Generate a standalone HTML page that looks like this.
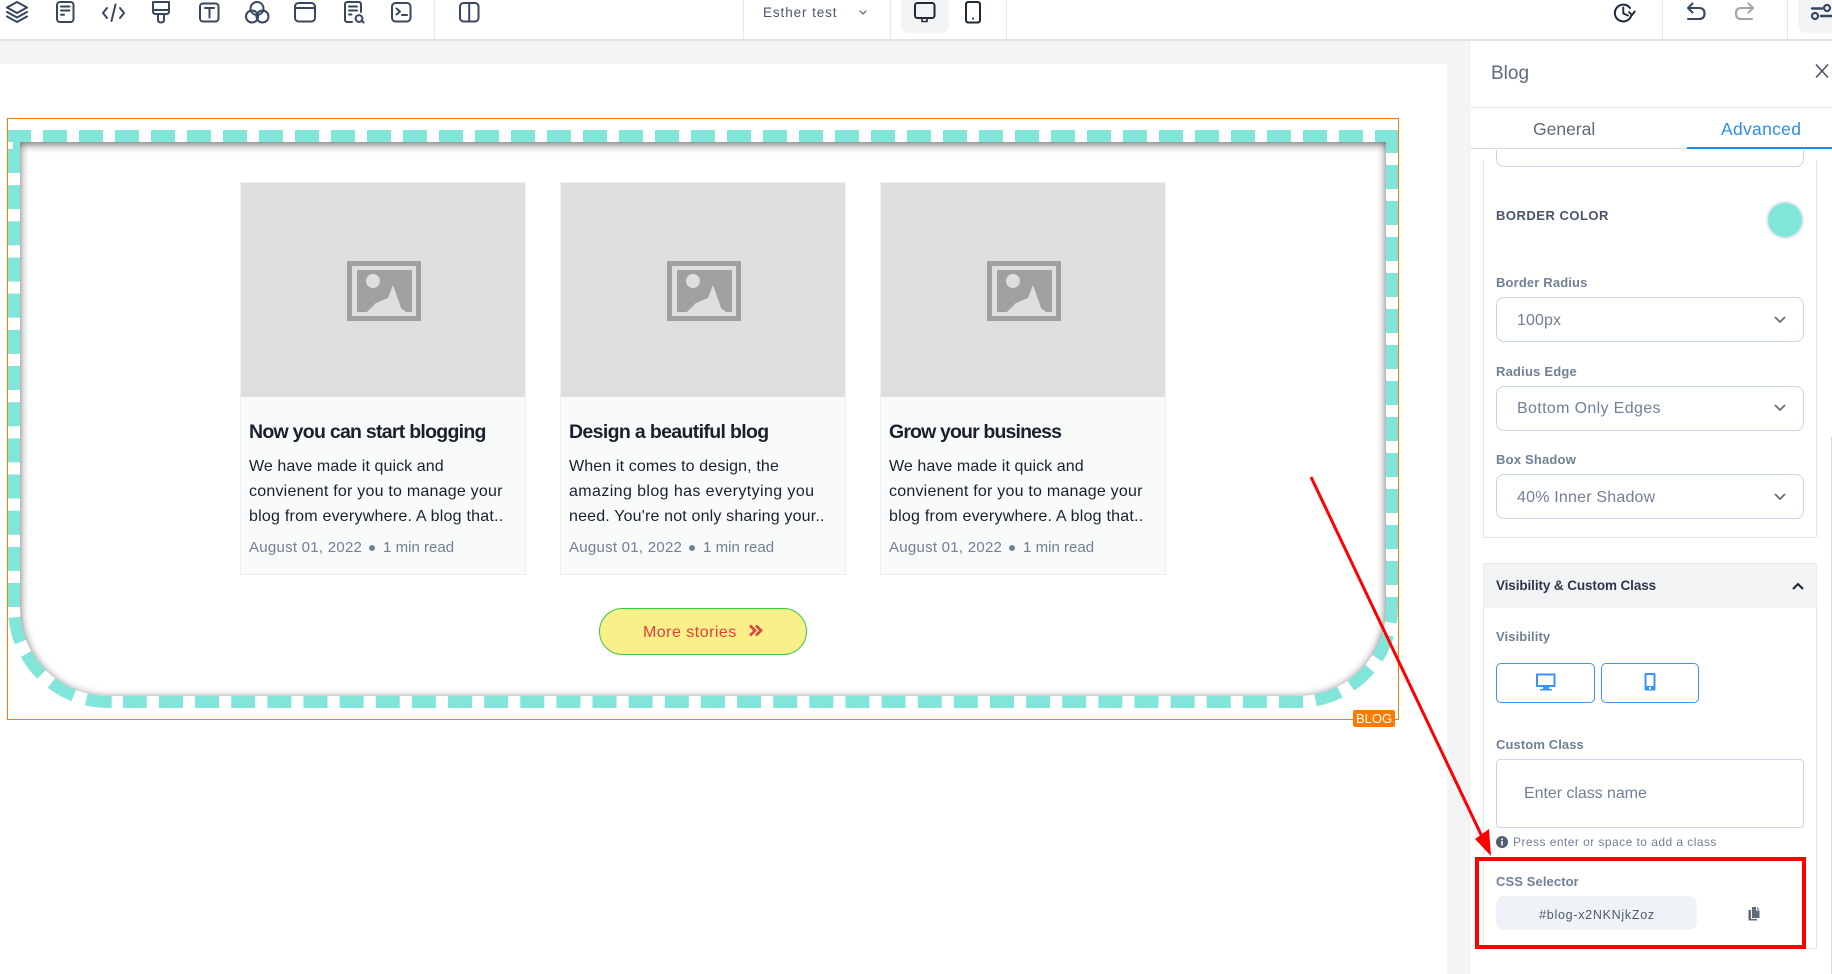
<!DOCTYPE html>
<html><head><meta charset="utf-8"><style>
html,body{margin:0;padding:0;width:1832px;height:974px;overflow:hidden;background:#fff;font-family:"Liberation Sans",sans-serif}
.a{position:absolute;box-sizing:border-box}
.t{position:absolute;white-space:nowrap;line-height:20px;height:20px}
.card{position:absolute;top:182px;width:286px;height:393px;background:#f9fafa;border:1px solid #eeeeee;box-sizing:border-box}
.img{position:absolute;left:0;top:0;width:284px;height:214px;background:#dedede}
.h{font-size:19.5px;font-weight:bold;color:#1a202c}
.b{font-size:16px;color:#1a202c}
.m{font-size:15px;color:#718096}
.l{font-size:13px;color:#718096;font-weight:bold;letter-spacing:.1px}
.sel{position:absolute;left:1496px;width:308px;height:45px;border:1px solid #cbd5e0;border-radius:8px;box-sizing:border-box;background:#fff}
.v{font-size:16px;color:#718096}
.d{position:absolute;top:0;width:1px;height:39px;background:#e2e8f0}
</style></head><body>
<div class="a" style="left:0;top:0;width:1832px;height:41px;background:#fff;border-bottom:2px solid #e2e2e4"></div>
<div class="a" style="left:0;top:41px;width:1472px;height:933px;background:#f3f4f6"></div>
<div class="a" style="left:0;top:64px;width:1447px;height:910px;background:#fff"></div>
<div class="d" style="left:434px"></div><div class="d" style="left:743px"></div><div class="d" style="left:890px"></div><div class="d" style="left:1006px"></div><div class="d" style="left:1662px"></div><div class="d" style="left:1787px"></div>
<div class="a" style="left:901px;top:0;width:48px;height:33px;background:#f3f4f6;border-radius:0 0 8px 8px"></div>
<div class="a" style="left:1798px;top:0;width:34px;height:33px;background:#f3f4f6;border-radius:0 0 0 8px"></div>
<div class="t" style="left:763px;top:3px;font-size:13.5px;color:#4a5568;letter-spacing:.9px">Esther test</div>

<svg class="a" style="left:0;top:0" width="1832" height="40" fill="none" stroke="#374760" stroke-width="2" stroke-linecap="round" stroke-linejoin="round">
<path d="M17 2L27 7.5L17 13L7 7.5Z" stroke-width="2.1"/><path d="M7 12L17 17.5L27 12" stroke-width="2.1"/><path d="M7 16.5L17 22L27 16.5" stroke-width="2.1"/>
<rect x="57" y="2" width="16.5" height="20" rx="3"/><path d="M61 6.5H69.5M61 10.5H69.5M61 14.8H64"/>
<path d="M107 8L103 13L107 18M120 8L124 13L120 18M115.5 4.5L111.5 21"/>
<path d="M153 2H169V11.5Q169 14 166.5 14H155.5Q153 14 153 11.5ZM153 10H169M158 14V20Q158 22.5 161 22.5T164 20V14"/>
<rect x="200" y="3.5" width="18.5" height="18" rx="3"/><path d="M205 8H214M209.5 8V17.5"/>
<circle cx="257" cy="8.5" r="6.5"/><circle cx="252" cy="16.5" r="6"/><circle cx="262.5" cy="16.5" r="6"/>
<rect x="295" y="3" width="20" height="18.5" rx="3.5"/><path d="M295 8H315"/>
<path d="M352 22H347.5Q345 22 345 19.5V4.5Q345 2 347.5 2H358.5Q361 2 361 4.5V12"/><path d="M349 6.5H357M349 10.5H357M349 14.5H351.5"/><circle cx="359" cy="18.5" r="3.4"/><path d="M362 21L363.5 22.5"/>
<rect x="392" y="3" width="18.5" height="18.5" rx="3.5"/><path d="M396.5 8.5L400 11.5L396.5 14.5M402 15H407"/>
<rect x="460" y="3" width="18.5" height="18.5" rx="3.5"/><path d="M469.2 3V21.5"/>
<path d="M860 11L863 14L866 11" stroke="#4a5568" stroke-width="1.1"/>
<rect x="915" y="3" width="19.5" height="15" rx="2.5" stroke="#1f2937"/><path d="M922 18.5V21.5H927V18.5" stroke="#1f2937" stroke-width="1.6"/>
<rect x="966" y="2" width="14" height="20.5" rx="2.2" stroke="#1f2937"/><path d="M973 18.5V18.6" stroke="#1f2937"/>
<path d="M1631.2 15.8A8.4 8.4 0 1 1 1630 8" stroke="#1f2937" stroke-width="2"/><path d="M1623.3 7.5V13.5L1628 15.5M1629 12L1632 15L1634.7 11.5" stroke="#1f2937" stroke-width="1.9"/>
<path d="M1688 8H1699Q1704.5 8 1704.5 13.5T1699 19H1688M1692.5 3.5L1688 8L1692.5 12.5" stroke-width="2.1"/>
<path d="M1753 8H1741Q1736 8 1736 13.5T1741 19H1752M1748.5 3.5L1753 8L1748.5 12.5" stroke="#a0a6b1" stroke-width="2.1"/>
<path d="M1812 8.5H1822M1821 16H1832" stroke-width="2.4"/><circle cx="1827" cy="8" r="3" stroke-width="2.2"/><circle cx="1815" cy="16" r="3" stroke-width="2.2"/>
</svg>

<!-- Canvas -->
<div class="a" style="left:7px;top:118px;width:1392px;height:602px;border:1px solid #ff7a00"></div>
<svg class="a" style="left:0;top:0" width="1400" height="720" fill="none" stroke="#81e6d9" stroke-width="12">
<path d="M8 136H1398" stroke-dasharray="24 12" stroke-dashoffset="1"/>
<path d="M1392 130V597" stroke-dasharray="24 12" stroke-dashoffset="1"/>
<path d="M1392 597V608A94 94 0 0 1 1298 702" stroke-dasharray="25.6 12.81"/>
<path d="M1303 702H123" stroke-dasharray="24 12.13"/>
<path d="M14 608A94 94 0 0 0 108 702H112" stroke-dasharray="25.6 13.2" stroke-dashoffset="-9.3"/>
<path d="M14 149V607" stroke-dasharray="24 12.17"/>
<rect x="13" y="142" width="7" height="7" fill="#81e6d9" stroke="none"/>
</svg>
<div class="a" style="left:8px;top:130px;width:1390px;height:578px;border:12px solid transparent;border-radius:0 0 100px 100px;box-shadow:inset 0 2px 9px rgba(0,0,0,.62)"></div>

<div class="card" style="left:240px"><div class="img"></div></div>
<div class="card" style="left:560px"><div class="img"></div></div>
<div class="card" style="left:880px"><div class="img"></div></div>
<svg class="a" style="left:347px;top:261px" width="74" height="60"><rect width="74" height="60" fill="#a0a0a0"/><rect x="5" y="5" width="64" height="50" fill="#dedede"/><rect x="10" y="9" width="55" height="42" fill="#a0a0a0"/><circle cx="26" cy="20" r="7" fill="#dedede"/><path d="M20 51L29 42L41 37L46 24L54 47L59 51Z" fill="#dedede"/></svg>
<svg class="a" style="left:667px;top:261px" width="74" height="60"><rect width="74" height="60" fill="#a0a0a0"/><rect x="5" y="5" width="64" height="50" fill="#dedede"/><rect x="10" y="9" width="55" height="42" fill="#a0a0a0"/><circle cx="26" cy="20" r="7" fill="#dedede"/><path d="M20 51L29 42L41 37L46 24L54 47L59 51Z" fill="#dedede"/></svg>
<svg class="a" style="left:987px;top:261px" width="74" height="60"><rect width="74" height="60" fill="#a0a0a0"/><rect x="5" y="5" width="64" height="50" fill="#dedede"/><rect x="10" y="9" width="55" height="42" fill="#a0a0a0"/><circle cx="26" cy="20" r="7" fill="#dedede"/><path d="M20 51L29 42L41 37L46 24L54 47L59 51Z" fill="#dedede"/></svg>

<div class="t h" style="left:249px;top:422px;letter-spacing:-.73px">Now you can start blogging</div>
<div class="t b" style="left:249px;top:457px;letter-spacing:.08px">We have made it quick and</div>
<div class="t b" style="left:249px;top:482px;letter-spacing:.22px">convienent for you to manage your</div>
<div class="t b" style="left:249px;top:507px;letter-spacing:.23px">blog from everywhere. A blog that..</div>
<div class="t m" style="left:249px;top:538px;letter-spacing:.26px">August 01, 2022</div><div class="a" style="left:369px;top:545px;width:6px;height:6px;border-radius:50%;background:#718096"></div><div class="t m" style="left:383px;top:538px;letter-spacing:.03px">1 min read</div>

<div class="t h" style="left:569px;top:422px;letter-spacing:-.65px">Design a beautiful blog</div>
<div class="t b" style="left:569px;top:457px;letter-spacing:.13px">When it comes to design, the</div>
<div class="t b" style="left:569px;top:482px;letter-spacing:.4px">amazing blog has everytying you</div>
<div class="t b" style="left:569px;top:507px;letter-spacing:.17px">need. You're not only sharing your..</div>
<div class="t m" style="left:569px;top:538px;letter-spacing:.26px">August 01, 2022</div><div class="a" style="left:689px;top:545px;width:6px;height:6px;border-radius:50%;background:#718096"></div><div class="t m" style="left:703px;top:538px;letter-spacing:.03px">1 min read</div>

<div class="t h" style="left:889px;top:422px;letter-spacing:-.85px">Grow your business</div>
<div class="t b" style="left:889px;top:457px;letter-spacing:.08px">We have made it quick and</div>
<div class="t b" style="left:889px;top:482px;letter-spacing:.22px">convienent for you to manage your</div>
<div class="t b" style="left:889px;top:507px;letter-spacing:.23px">blog from everywhere. A blog that..</div>
<div class="t m" style="left:889px;top:538px;letter-spacing:.26px">August 01, 2022</div><div class="a" style="left:1009px;top:545px;width:6px;height:6px;border-radius:50%;background:#718096"></div><div class="t m" style="left:1023px;top:538px;letter-spacing:.03px">1 min read</div>

<div class="a" style="left:599px;top:608px;width:208px;height:47px;background:#faf089;border:1px solid #38c742;border-radius:24px"></div>
<div class="t" style="left:643px;top:623px;font-size:16px;color:#e53e3e;letter-spacing:.48px">More stories</div>
<svg class="a" style="left:748px;top:623px" width="16" height="16" fill="none" stroke="#e53e3e" stroke-width="2.6"><path d="M2 2.5L7 7.5L2 12.5M8 2.5L13 7.5L8 12.5"/></svg>
<div class="a" style="left:1353px;top:710px;width:42px;height:17px;background:#ff7a00;border-radius:2px;color:#fff;font-size:13px;line-height:17px;text-align:center">BLOG</div>

<!-- Panel -->
<div class="a" style="left:1471px;top:41px;width:361px;height:933px;background:#fff"></div>
<div class="t" style="left:1491px;top:64px;font-size:19px;color:#5f6b7a">Blog</div>
<svg class="a" style="left:1815px;top:63px" width="14" height="16" stroke="#4a5568" stroke-width="1.6"><path d="M1 1.5L13 14.5M13 1.5L1 14.5"/></svg>
<div class="a" style="left:1471px;top:107px;width:361px;height:1px;background:#e2e8f0"></div>
<div class="t" style="left:1533px;top:119px;font-size:17.5px;color:#5f6b7a">General</div>
<div class="t" style="left:1721px;top:119px;font-size:17.5px;color:#2b8ef0;letter-spacing:.3px">Advanced</div>
<div class="a" style="left:1471px;top:148px;width:216px;height:1px;background:#d5dbe2"></div>
<div class="a" style="left:1687px;top:147px;width:145px;height:2px;background:#1f8cf0"></div>

<div class="a" style="left:1483px;top:160px;width:334px;height:378px;border:1px solid #e2e5ea;border-top:0;border-radius:0 0 2px 2px"></div>
<div class="a" style="left:1496px;top:150px;width:308px;height:17px;border:1px solid #cbd5e0;border-top:0;border-radius:0 0 8px 8px"></div>
<div class="t" style="left:1496px;top:206px;font-size:13px;font-weight:bold;color:#4a5568;letter-spacing:.5px">BORDER COLOR</div>
<div class="a" style="left:1766px;top:201px;width:38px;height:38px;border-radius:50%;background:#81e6d9;border:2px solid #e2e8f0"></div>

<div class="t l" style="left:1496px;top:273px;letter-spacing:.15px">Border Radius</div>
<div class="sel" style="top:297px"></div><div class="t v" style="left:1517px;top:311px;letter-spacing:.1px">100px</div>
<div class="t l" style="left:1496px;top:362px;letter-spacing:.2px">Radius Edge</div>
<div class="sel" style="top:386px"></div><div class="t v" style="left:1517px;top:399px;letter-spacing:.35px">Bottom Only Edges</div>
<div class="t l" style="left:1496px;top:450px;letter-spacing:.2px">Box Shadow</div>
<div class="sel" style="top:474px"></div><div class="t v" style="left:1517px;top:488px;letter-spacing:.2px">40% Inner Shadow</div>
<svg class="a" style="left:1773px;top:311px" width="14" height="200" fill="none" stroke="#5f6b7a" stroke-width="1.7"><path d="M2 6L7 11L12 6M2 94L7 99L12 94M2 183L7 188L12 183"/></svg>

<div class="a" style="left:1483px;top:563px;width:334px;height:386px;border:1px solid #e2e5ea"></div>
<div class="a" style="left:1483px;top:563px;width:334px;height:45px;background:#f3f4f6;border:1px solid #e8eaee;border-bottom:0"></div>
<div class="t" style="left:1496px;top:576px;font-size:13.5px;font-weight:bold;color:#2d3748;letter-spacing:-.1px">Visibility &amp; Custom Class</div>
<svg class="a" style="left:1791px;top:580px" width="14" height="12" fill="none" stroke="#1a202c" stroke-width="2"><path d="M2 9L7 4L12 9"/></svg>

<div class="t l" style="left:1496px;top:627px">Visibility</div>
<div class="a" style="left:1496px;top:663px;width:99px;height:40px;border:1px solid #3b93f7;border-radius:5px"></div>
<div class="a" style="left:1601px;top:663px;width:98px;height:40px;border:1px solid #3b93f7;border-radius:5px"></div>
<svg class="a" style="left:1535px;top:672px" width="22" height="20" fill="#3b93f7"><path d="M1 1.5H20.5V15H1ZM3 3.5V13H18.5V3.5Z" fill-rule="evenodd"/><path d="M8 15H14V17H17V18.5H5V17H8Z"/></svg>
<svg class="a" style="left:1644px;top:673px" width="12" height="18" fill="#3b93f7"><path d="M2 0H10Q11.5 0 11.5 1.5V16Q11.5 17.5 10 17.5H2Q.5 17.5 .5 16V1.5Q.5 0 2 0ZM2.5 2V13H9.5V2ZM6 14A1.2 1.2 0 1 0 6 16.4A1.2 1.2 0 1 0 6 14Z" fill-rule="evenodd"/></svg>

<div class="t l" style="left:1496px;top:735px">Custom Class</div>
<div class="a" style="left:1496px;top:759px;width:308px;height:69px;border:1px solid #cbd5e0;border-radius:4px"></div>
<div class="t" style="left:1524px;top:784px;font-size:16px;color:#718096;letter-spacing:-.05px">Enter class name</div>
<svg class="a" style="left:1496px;top:836px" width="12" height="12"><circle cx="6" cy="6" r="6" fill="#4f5f6f"/><rect x="5.2" y="5" width="1.6" height="4.5" fill="#fff"/><rect x="5.2" y="2.5" width="1.6" height="1.6" fill="#fff"/></svg>
<div class="t" style="left:1513px;top:832px;font-size:12px;color:#718096;letter-spacing:.45px">Press enter or space to add a class</div>

<div class="t l" style="left:1496px;top:872px">CSS Selector</div>
<div class="a" style="left:1496px;top:896px;width:201px;height:34px;background:#eff3f7;border-radius:8px"></div>
<div class="t" style="left:1497px;width:200px;text-align:center;top:905px;font-size:12.5px;color:#4f5b6b;letter-spacing:.72px">#blog-x2NKNjkZoz</div>
<svg class="a" style="left:1748px;top:907px" width="12" height="14" fill="#5f6b7a"><path d="M4 0H8V3.5H11.5V11H4Z"/><path d="M9 0L11.5 2.5H9Z"/><path d="M.5 3H3V12H9V13.5H.5Z"/></svg>
<div class="a" style="left:1831px;top:437px;width:1px;height:537px;background:#d8d8d8"></div>

<!-- Annotation -->
<svg class="a" style="left:0;top:0" width="1832" height="974" fill="none">
<path d="M1311 477L1486 845" stroke="#ff0000" stroke-width="3"/>
<path d="M1475 839L1491 856L1489 829Z" fill="#ff0000"/>
<rect x="1477" y="859" width="327" height="88" stroke="#ff0000" stroke-width="4"/>
</svg>
</body></html>
